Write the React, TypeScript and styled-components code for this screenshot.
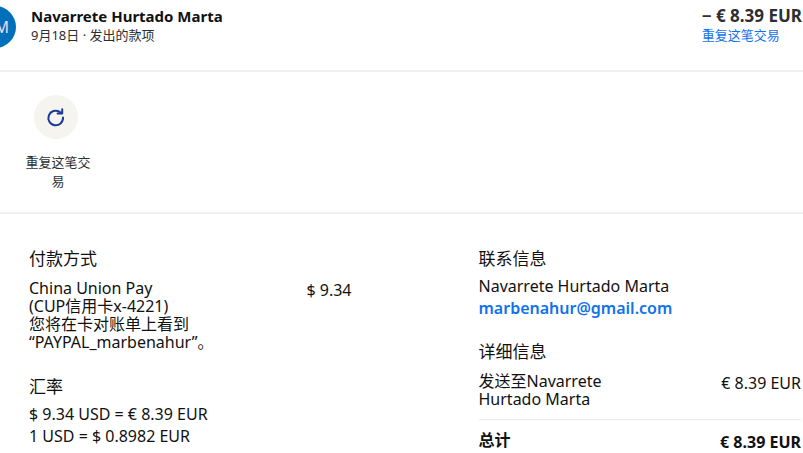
import React from "react";
import styled, { createGlobalStyle } from "styled-components";

const GlobalStyle = createGlobalStyle`
  * { box-sizing: border-box; }
  body {
    margin: 0;
    background: #fff;
    color: #111;
    font-family: "Noto Sans", "Noto Sans CJK SC", sans-serif;
    font-size: 16px;
    line-height: 22px;
    overflow-x: hidden;
  }
  h2, p, dl, dt, dd { margin: 0; font-size: inherit; }
`;

const Page = styled.main`
  overflow: hidden;
`;

const Header = styled.header`
  display: flex;
  align-items: flex-start;
  height: 72px;
  padding: 6px 1px 0 0;
  border-bottom: 2px solid #f0f0ee;
`;

const Avatar = styled.div`
  display: flex;
  align-items: center;
  justify-content: flex-end;
  flex: none;
  width: 42px;
  height: 42px;
  margin-left: -26px;
  margin-right: 15px;
  padding-right: 7px;
  border-radius: 50%;
  background: #0070ba;
  color: #f0d8f4;
  font-size: 16px;
`;

const HeaderText = styled.div<{ $grow?: boolean }>`
  flex: ${(p) => (p.$grow ? "1" : "none")};
  font-size: 13px;
  line-height: 18px;
  color: #2c2e2f;
`;

const Title = styled.p<{ $amount?: boolean }>`
  && { font-size: ${(p) => (p.$amount ? "17px" : "15px")}; }
  line-height: 20px;
  font-weight: 700;
  color: ${(p) => (p.$amount ? "#2c2e2f" : "#111")};
`;

const Link = styled.a<{ $bold?: boolean }>`
  color: #1072eb;
  font-size: ${(p) => (p.$bold ? "16px" : "13px")};
  font-weight: ${(p) => (p.$bold ? 600 : 400)};
  text-decoration: none;
`;

const Actions = styled.section`
  height: 142px;
  padding: 23px 0 0 22px;
  border-bottom: 2px solid #f0f0ee;
`;

const ActionButton = styled.button`
  display: flex;
  flex-direction: column;
  align-items: center;
  gap: 14px;
  width: 72px;
  padding: 0 3px;
  border: 0;
  background: none;
  color: #2c2e2f;
  font: inherit;
  font-size: 13px;
  line-height: 19px;
  cursor: pointer;
`;

const ActionIcon = styled.span`
  display: flex;
  align-items: center;
  justify-content: center;
  width: 44px;
  height: 44px;
  margin-right: 4px;
  border-radius: 50%;
  background: #f5f4ef;
`;

const Details = styled.div`
  display: grid;
  grid-template-columns: 1fr 1fr;
  gap: 127px;
  padding: 34px 2px 0 29px;
`;

const Section = styled.section<{ $gap: number }>`
  margin-bottom: ${(p) => p.$gap}px;
`;

const Heading = styled.h2<{ $tight?: boolean }>`
  && { font-size: 17px; }
  margin-bottom: ${(p) => (p.$tight ? 5 : 6)}px;
  font-weight: 400;
`;

const Row = styled.div<{ $bold?: boolean }>`
  display: flex;
  justify-content: space-between;
  font-weight: ${(p) => (p.$bold ? 700 : 400)};
`;

const Label = styled.dt<{ $narrow?: boolean }>`
  width: ${(p) => (p.$narrow ? "140px" : "auto")};
  padding-top: 3px;
  line-height: 18px;
`;

const Amount = styled.dd`
  padding-top: 3px;
  white-space: nowrap;
`;

const Total = styled(Row)`
  margin-top: 11px;
  padding-top: 8px;
  border-top: 1px solid #eaeaea;
`;

const RepeatIcon = () => (
  <svg width="20" height="20" viewBox="0 0 20 20" fill="none" stroke="#1a3a9c" strokeWidth="2" aria-hidden="true">
    <path d="M17 10.6A7.3 7.3 0 1 1 13.6 4.8L15.4 6.2" strokeLinecap="round" />
    <path d="M16.2 2.2v4.4h-4.6" strokeLinecap="round" strokeLinejoin="round" />
  </svg>
);

export default function App() {
  return (
    <>
      <GlobalStyle />
      <Page lang="zh-CN">
        <Header>
          <Avatar>M</Avatar>
          <HeaderText $grow>
            <Title>Navarrete Hurtado Marta</Title>
            <p>9月18日 · 发出的款项</p>
          </HeaderText>
          <HeaderText>
            <Title $amount>− € 8.39 EUR</Title>
            <Link href="#repeat">重复这笔交易</Link>
          </HeaderText>
        </Header>
        <Actions>
          <ActionButton type="button">
            <ActionIcon><RepeatIcon /></ActionIcon>
            重复这笔交易
          </ActionButton>
        </Actions>
        <Details>
          <div>
            <Section $gap={25}>
              <Heading>付款方式</Heading>
              <dl>
                <Row>
                  <Label>
                    China Union Pay<br />
                    (CUP信用卡x-4221)<br />
                    您将在卡对账单上看到<br />
                    “PAYPAL_marbenahur”。
                  </Label>
                  <Amount>$ 9.34</Amount>
                </Row>
              </dl>
            </Section>
            <Section $gap={0}>
              <Heading $tight>汇率</Heading>
              <p>$ 9.34 USD = € 8.39 EUR</p>
              <p>1 USD = $ 0.8982 EUR</p>
            </Section>
          </div>
          <div>
            <Section $gap={22}>
              <Heading $tight>联系信息</Heading>
              <p>Navarrete Hurtado Marta</p>
              <p><Link $bold href="mailto:marbenahur@gmail.com">marbenahur@gmail.com</Link></p>
            </Section>
            <Section $gap={0}>
              <Heading>详细信息</Heading>
              <dl>
                <Row>
                  <Label $narrow>发送至Navarrete Hurtado Marta</Label>
                  <Amount>€ 8.39 EUR</Amount>
                </Row>
                <Total $bold>
                  <Label>总计</Label>
                  <Amount>€ 8.39 EUR</Amount>
                </Total>
              </dl>
            </Section>
          </div>
        </Details>
      </Page>
    </>
  );
}
